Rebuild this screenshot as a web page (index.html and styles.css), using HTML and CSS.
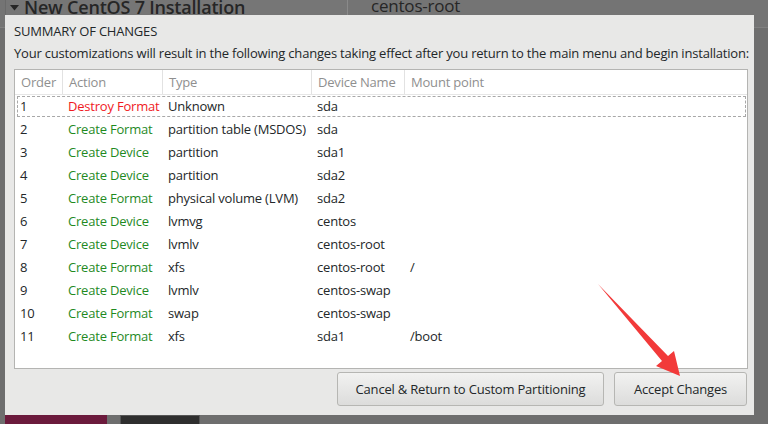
FILE: index.html
```html
<!DOCTYPE html>
<html>
<head>
<meta charset="utf-8">
<link rel="stylesheet" href="styles.css">
</head>
<body>
<div class="screen">
  <div class="backdrop">
    <div class="bg-top">
      <div class="side-panel"><svg class="tri" width="9" height="6" viewBox="0 0 9 6"><polygon points="0,0 9,0 4.5,5.5" fill="#262626"/></svg>New CentOS 7 Installation</div>
      <div class="detail">centos-root</div>
    </div>
    <div class="bg-bottom">
      <div class="blk crimson"></div>
      <div class="blk dark"></div>
    </div>
  </div>

  <div class="dialog">
    <div class="title">SUMMARY OF CHANGES</div>
    <div class="subtitle">Your customizations will result in the following changes taking effect after you return to the main menu and begin installation:</div>
    <div class="table">
      <div class="row head">
        <div class="c">Order</div><div class="c">Action</div><div class="c">Type</div><div class="c">Device Name</div><div class="c last">Mount point</div>
      </div>
      <div class="row focus"><div class="c">1</div><div class="c red">Destroy Format</div><div class="c">Unknown</div><div class="c">sda</div><div class="c"></div></div>
      <div class="row"><div class="c">2</div><div class="c green">Create Format</div><div class="c">partition table (MSDOS)</div><div class="c">sda</div><div class="c"></div></div>
      <div class="row"><div class="c">3</div><div class="c green">Create Device</div><div class="c">partition</div><div class="c">sda1</div><div class="c"></div></div>
      <div class="row"><div class="c">4</div><div class="c green">Create Device</div><div class="c">partition</div><div class="c">sda2</div><div class="c"></div></div>
      <div class="row"><div class="c">5</div><div class="c green">Create Format</div><div class="c">physical volume (LVM)</div><div class="c">sda2</div><div class="c"></div></div>
      <div class="row"><div class="c">6</div><div class="c green">Create Device</div><div class="c">lvmvg</div><div class="c">centos</div><div class="c"></div></div>
      <div class="row"><div class="c">7</div><div class="c green">Create Device</div><div class="c">lvmlv</div><div class="c">centos-root</div><div class="c"></div></div>
      <div class="row"><div class="c">8</div><div class="c green">Create Format</div><div class="c">xfs</div><div class="c">centos-root</div><div class="c">/</div></div>
      <div class="row"><div class="c">9</div><div class="c green">Create Device</div><div class="c">lvmlv</div><div class="c">centos-swap</div><div class="c"></div></div>
      <div class="row"><div class="c">10</div><div class="c green">Create Format</div><div class="c">swap</div><div class="c">centos-swap</div><div class="c"></div></div>
      <div class="row"><div class="c">11</div><div class="c green">Create Format</div><div class="c">xfs</div><div class="c">sda1</div><div class="c">/boot</div></div>
    </div>
    <div class="buttons">
      <button class="btn cancel">Cancel &amp; Return to Custom Partitioning</button>
      <button class="btn accept">Accept Changes</button>
    </div>
  </div>

  <svg class="arrow" width="768" height="424" viewBox="0 0 768 424">
    <polygon points="598,284 668,356 674,351 680,376 656,366 662,361" fill="#f23a3a"/>
  </svg>
</div>
</body>
</html>
```

FILE: styles.css
```css
* { box-sizing: border-box; }
html, body { margin: 0; padding: 0; }
body {
  width: 768px;
  height: 424px;
  overflow: hidden;
  background: #6e6e6e;
  font-family: "Open Sans", "DejaVu Sans", sans-serif;
  color: #2e3436;
}
.screen {
  position: relative;
  width: 768px;
  height: 424px;
}
.backdrop {
  height: 424px;
  display: flex;
  flex-direction: column;
  justify-content: space-between;
}
.bg-top {
  display: flex;
  padding-left: 5px;
  height: 28px;
  background: #747474;
  border-bottom: 1px solid #808080;
}
.side-panel {
  width: 343px;
  background: #767676;
  border-right: 1px solid #8a8a8a;
  border-left: 1px solid #6a6a6a;
  font-size: 18px;
  font-weight: 600;
  line-height: 20px;
  padding: 0 0 0 4px;
  margin-top: -3px;
  color: #262626;
  white-space: nowrap;
  letter-spacing: -0.2px;
}
.tri {
  margin-right: 5px;
  vertical-align: 3px;
}
.detail {
  margin-left: 23px;
  font-size: 17px;
  line-height: 20px;
  margin-top: -4px;
  color: #262626;
  letter-spacing: -0.2px;
}
.bg-bottom {
  display: flex;
  gap: 13px;
  padding-left: 5px;
  height: 9px;
}
.blk { height: 9px; }
.crimson { width: 102px; background: #6b1a3c; }
.dark { width: 80px; background: #2e2e2e; border: 1px solid #555; border-bottom: none; }

.dialog {
  position: absolute;
  left: 5px;
  top: 15px;
  width: 749px;
  height: 400px;
  background: #e8e8e7;
  padding: 8px 7px 9px 9px;
  display: flex;
  flex-direction: column;
  font-size: 13px;
  letter-spacing: -0.2px;
  color: #232729;
}
.title {
  line-height: 16px;
  height: 16px;
}
.subtitle {
  margin-top: 6px;
  line-height: 16px;
  height: 16px;
  white-space: nowrap;
}
.table {
  margin-top: 8px;
  width: 734px;
  height: 302px;
  background: #fff;
  border: 1px solid #b4b4b2;
}
.row {
  display: grid;
  grid-template-columns: 48px 100px 149px 93px 1fr;
  height: 23px;
  align-items: center;
  position: relative;
}
.row .c {
  padding-left: 5px;
  white-space: nowrap;
  line-height: 23px;
  height: 23px;
}
.row.head {
  height: 25px;
  border-bottom: 1px solid #e6e6e6;
  color: #8f8f8f;
}
.row.head .c {
  height: 24px;
  line-height: 24px;
  padding-left: 6px;
  border-right: 1px solid #e2e2e2;
}
.row.head .c.last { border-right: none; }
.row.focus::after {
  content: "";
  position: absolute;
  left: 2px;
  right: 1px;
  top: 1px;
  bottom: 1px;
  border: 1px dashed #a8a8a8;
  pointer-events: none;
}
.red { color: #f0191e; }
.green { color: #1f8a1f; }

.buttons {
  margin-top: 3px;
  display: flex;
  justify-content: flex-end;
  gap: 10px;
  padding-right: 0;
}
.btn {
  height: 34px;
  border: 1px solid #b6b6b3;
  border-radius: 3px;
  background: linear-gradient(#f2f2f1, #dcdcdb);
  font-family: inherit;
  font-size: 13px;
  letter-spacing: -0.2px;
  color: #232729;
  padding: 0;
}
.cancel { width: 267px; }
.accept { width: 133px; }

.arrow {
  position: absolute;
  left: 0;
  top: 0;
  pointer-events: none;
}
```
